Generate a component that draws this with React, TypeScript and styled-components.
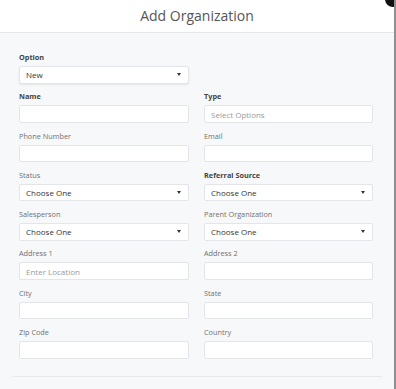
import styled, { createGlobalStyle } from "styled-components";

const GlobalStyle = createGlobalStyle`
    html, body {
        margin: 0;
        padding: 0;
        background: #ffffff;
        font-family: "Open Sans", "Liberation Sans", sans-serif;
    }
    * {
        box-sizing: border-box;
    }
`;

const Modal = styled.div`
    position: relative;
    width: 396px;
    height: 389px;
    overflow: hidden;
    background: #f7f8fa;
    border-right: 2px solid #8f8f8f;
`;

const CloseDot = styled.div`
    position: absolute;
    top: -9px;
    right: -7px;
    width: 16px;
    height: 16px;
    border-radius: 50%;
    background: #111;
`;

const Header = styled.div`
    height: 33px;
    background: #ffffff;
    border-bottom: 1px solid #e6e7e9;
    display: flex;
    align-items: center;
    justify-content: center;
    padding-bottom: 2px;
`;

const Title = styled.div`
    font-size: 14px;
    color: #555;
    font-weight: 400;
`;

const Body = styled.div`
    padding: 19px 19px 0 19px;
`;

const Grid = styled.div`
    display: grid;
    grid-template-columns: 170px 169px;
    column-gap: 15px;
    row-gap: 7.8px;
`;

const Field = styled.div`
    display: flex;
    flex-direction: column;
`;

const Label = styled.div<{ $bold?: boolean }>`
    height: 10px;
    line-height: 10px;
    margin-bottom: 4px;
    font-size: 7.3px;
    color: ${({ $bold }) => ($bold ? "#444" : "#707070")};
    font-weight: ${({ $bold }) => ($bold ? 700 : 400)};
`;

const Box = styled.div<{ $shadow?: boolean }>`
    height: 17.5px;
    background: #ffffff;
    border: 1px solid #e4e5e8;
    border-radius: 2px;
    display: flex;
    align-items: center;
    justify-content: space-between;
    padding: 0 6px 0 6px;
    box-shadow: ${({ $shadow }) => ($shadow ? "0 1px 2px rgba(0,0,0,0.08)" : "none")};
`;

const BoxText = styled.span<{ $placeholder?: boolean }>`
    font-size: 8px;
    color: ${({ $placeholder }) => ($placeholder ? "#9a9a9a" : "#333")};
`;

const Caret = styled.span`
    width: 0;
    height: 0;
    border-left: 2.5px solid transparent;
    border-right: 2.5px solid transparent;
    border-top: 3.5px solid #333;
    margin-right: 1px;
`;

const Footer = styled.div`
    margin: 17px -7px 0 -7px;
    border-top: 1px solid #e8e9eb;
`;

type FieldDef = {
    label: string;
    bold?: boolean;
    value?: string;
    placeholder?: string;
    select?: boolean;
};

const fields: FieldDef[] = [
    { label: "Name", bold: true },
    { label: "Type", bold: true, placeholder: "Select Options" },
    { label: "Phone Number" },
    { label: "Email" },
    { label: "Status", value: "Choose One", select: true },
    { label: "Referral Source", bold: true, value: "Choose One", select: true },
    { label: "Salesperson", value: "Choose One", select: true },
    { label: "Parent Organization", value: "Choose One", select: true },
    { label: "Address 1", placeholder: "Enter Location" },
    { label: "Address 2" },
    { label: "City" },
    { label: "State" },
    { label: "Zip Code" },
    { label: "Country" },
];

const FormField = ({ def, shadow }: { def: FieldDef; shadow?: boolean }) => (
    <Field>
        <Label $bold={def.bold}>{def.label}</Label>
        <Box $shadow={shadow}>
            <BoxText $placeholder={!def.value}>{def.value || def.placeholder || ""}</BoxText>
            {def.select && <Caret />}
        </Box>
    </Field>
);

const App = () => {
    return (
        <>
            <GlobalStyle />
            <Modal>
                <CloseDot />
                <Header>
                    <Title>Add Organization</Title>
                </Header>
                <Body>
                    <Grid>
                        <FormField def={{ label: "Option", bold: true, value: "New", select: true }} shadow />
                        <div />
                        {fields.map((f) => (
                            <FormField key={f.label} def={f} />
                        ))}
                    </Grid>
                    <Footer />
                </Body>
            </Modal>
        </>
    );
};

export default App;
